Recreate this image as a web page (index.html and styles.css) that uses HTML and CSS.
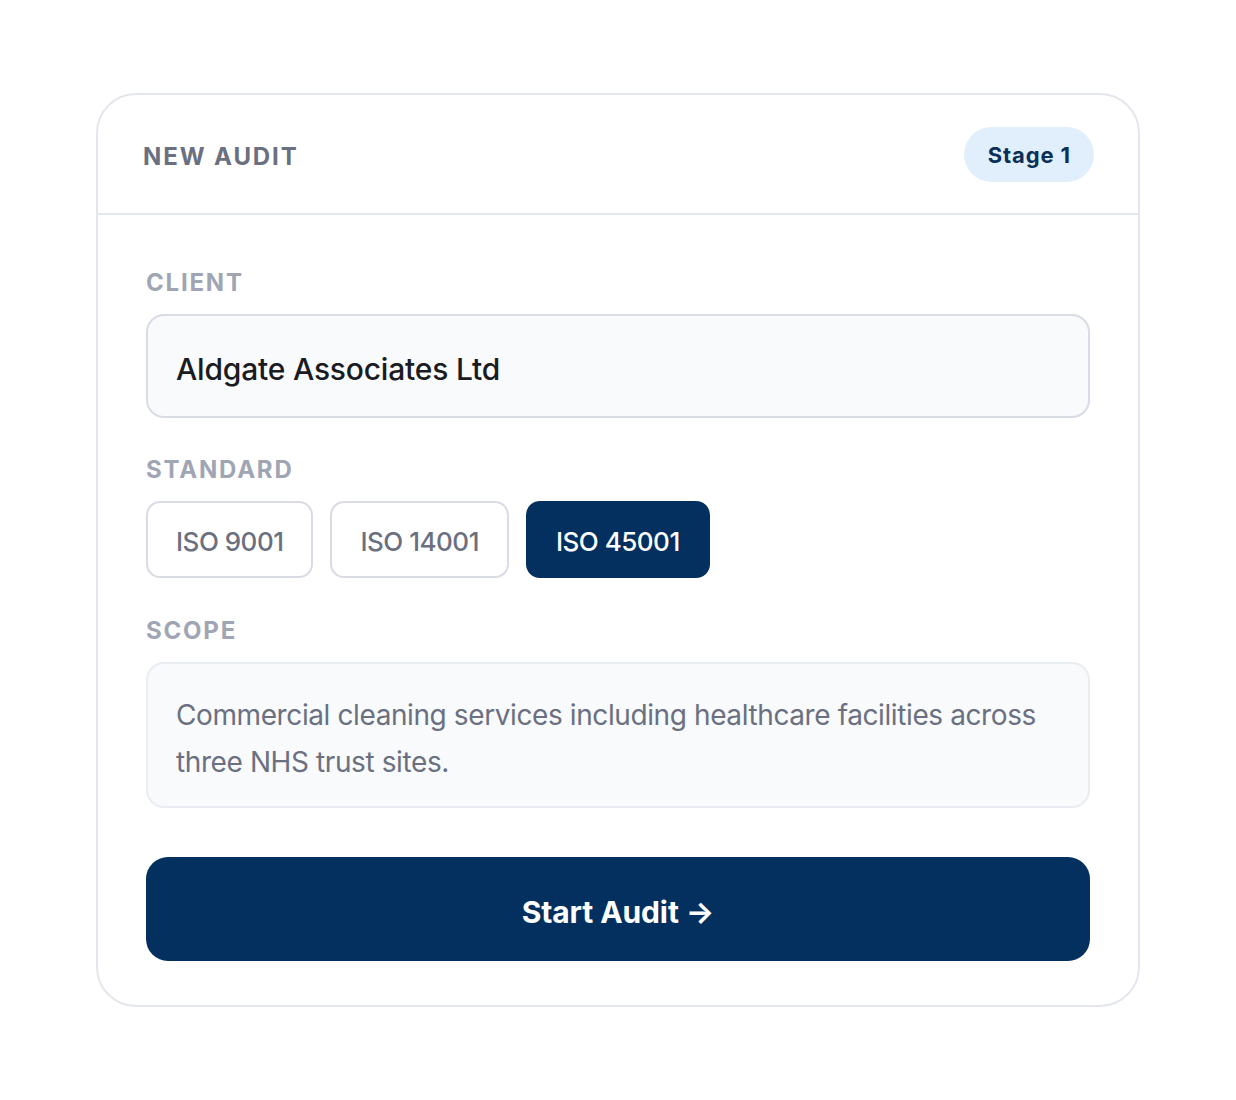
FILE: index.html
```html
<!DOCTYPE html>
<html lang="en">
<head>
<meta charset="utf-8">
<title>New Audit</title>
<link rel="stylesheet" href="styles.css">
</head>
<body>
<main class="stage">
  <section class="card">
    <header class="card-head">
      <h1 class="card-title">NEW AUDIT</h1>
      <span class="badge">Stage 1</span>
    </header>
    <div class="card-body">
      <div class="field">
        <div class="label">CLIENT</div>
        <div class="input">Aldgate Associates Ltd</div>
      </div>
      <div class="field field-standard">
        <div class="label">STANDARD</div>
        <div class="chips">
          <span class="chip">ISO 9001</span>
          <span class="chip">ISO 14001</span>
          <span class="chip chip-active">ISO 45001</span>
        </div>
      </div>
      <div class="field field-scope">
        <div class="label">SCOPE</div>
        <div class="textarea">Commercial cleaning services including healthcare facilities across three NHS trust sites.</div>
      </div>
      <button class="primary" type="button">Start Audit <span class="arrow">→</span></button>
    </div>
  </section>
</main>
</body>
</html>
```

FILE: styles.css
```css
* { box-sizing: border-box; }
html, body { margin: 0; padding: 0; background: #ffffff; }
body { font-family: Inter, "Noto Sans", sans-serif; }

.stage {
  padding: 93px 97px 0 96px;
  width: 1236px;
}

.card {
  width: 1044px;
  border: 2px solid #e3e6ec;
  border-radius: 40px;
  background: #fff;
}

.card-head {
  display: flex;
  align-items: center;
  justify-content: space-between;
  padding: 32px 44px 31px 45px;
  border-bottom: 2px solid #e3e8ef;
}

.card-title {
  margin: 0;
  font-size: 24px;
  font-weight: 700;
  letter-spacing: 1.9px;
  color: #6b7080;
  line-height: 1;
  position: relative;
  top: 2px;
}

.badge {
  display: inline-flex;
  align-items: center;
  height: 55px;
  padding: 0 23px 0 24px;
  border-radius: 28px;
  background: #e1effd;
  color: #0b2f57;
  font-size: 22px;
  font-weight: 700;
  letter-spacing: 0.9px;
}

.card-body {
  display: flex;
  flex-direction: column;
  padding: 53px 48px 44px 48px;
}

.field { display: flex; flex-direction: column; }
.field-standard { margin-top: 37px; }
.field-scope { margin-top: 38px; }

.label {
  font-size: 24px;
  font-weight: 700;
  letter-spacing: 1.8px;
  color: #a0a5b4;
  line-height: 30px;
  margin-bottom: 16px;
}

.input {
  height: 104px;
  display: flex;
  align-items: center;
  padding: 5px 28px 0 28px;
  border: 2px solid #d9dbe5;
  border-radius: 18px;
  background: #f8fafc;
  font-size: 30px;
  font-weight: 500;
  letter-spacing: -0.2px;
  color: #1b1b22;
}

.chips { display: flex; gap: 17px; }

.chip {
  display: inline-flex;
  align-items: center;
  height: 77px;
  padding: 4px 28px 0 28px;
  border: 2px solid #d9dbe5;
  border-radius: 14px;
  background: #fff;
  font-size: 26px;
  font-weight: 500;
  letter-spacing: -0.5px;
  color: #6b7080;
}

.chip-active {
  background: #03305f;
  border-color: #03305f;
  color: #fff;
}

.textarea {
  height: 146px;
  padding: 28px 28px 20px 28px;
  border: 2px solid #e9ecf1;
  border-radius: 18px;
  background: #f8fafc;
  font-size: 28px;
  line-height: 47px;
  letter-spacing: -0.4px;
  color: #6b7080;
}

.primary {
  margin-top: 49px;
  height: 104px;
  width: 100%;
  padding: 5px 0 0 0;
  border: none;
  border-radius: 22px;
  background: #03305f;
  color: #fff;
  font-family: inherit;
  font-size: 30px;
  font-weight: 700;
  letter-spacing: -0.1px;
}
.arrow { font-weight: 700; }
```
